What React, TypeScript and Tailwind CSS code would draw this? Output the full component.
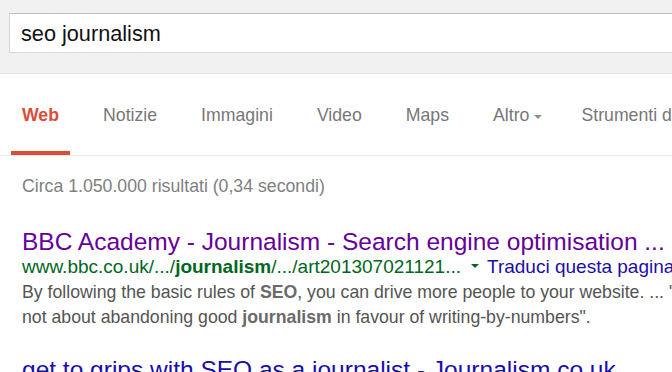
/**
 * SearchResults - Google results page, Italian locale, zoomed view.
 */

const tabs = ["Web", "Notizie", "Immagini", "Video", "Maps"];

export default function App() {
  return (
    <div className="h-[372px] w-full overflow-hidden bg-white font-['Liberation_Sans',Arial,sans-serif]">
      {/* Search bar */}
      <header className="h-[74px] overflow-hidden border-b border-[#e5e5e5] bg-[#f1f1f1] pl-[9px] pt-[13px]">
        <div className="h-[40px] w-[700px] border border-[#d9d9d9] border-t-[#c0c0c0] bg-white pl-[11px] pt-[2px] text-[21.7px] leading-[36px] whitespace-nowrap text-[#111]">
          seo journalism
        </div>
      </header>

      {/* Tabs */}
      <nav className="flex h-[82px] gap-[22px] overflow-hidden border-b border-[#ebebeb] pl-[11px] text-[17.7px] leading-[24px] whitespace-nowrap">
        {tabs.map((t, i) => (
          <div
            key={t}
            className={`h-[81px] shrink-0 border-b-4 px-[11px] pt-[29px] ${
              i === 0
                ? "border-[#dd4b39] font-bold text-[#dd4b39]"
                : "border-transparent text-[#777]"
            }`}
          >
            {t}
          </div>
        ))}
        <div className="h-[81px] shrink-0 border-b-4 border-transparent pl-[11px] pr-[6px] pt-[29px] text-[#777]">
          Altro
          <span className="ml-[5px] mb-[2px] inline-block border-x-4 border-t-4 border-x-transparent border-t-[#909090]" />
        </div>
        <div className="h-[81px] shrink-0 border-b-4 border-transparent px-[11px] pt-[29px] text-[#777]">
          Strumenti di ricerca
        </div>
      </nav>

      <main className="pl-[22px] whitespace-nowrap">
        <div className="mt-[18px] text-[17.7px] leading-[24px] text-[#808080]">
          Circa 1.050.000 risultati (0,34 secondi)
        </div>

        {/* First result */}
        <div className="mt-[29.5px]">
          <h3 className="text-[24.5px] leading-[28px] text-[#660099]">
            BBC Academy - Journalism - Search engine optimisation ...
          </h3>
          <div className="text-[19px] leading-[22px]">
            <cite className="not-italic text-[#006621]">
              www.bbc.co.uk/.../<b>journalism</b>/.../art201307021121...
            </cite>
            <span className="mb-[5px] ml-[10px] mr-[8px] inline-block border-x-4 border-t-4 border-x-transparent border-t-[#006621]" />
            <span className="text-[#1a0dab]">Traduci questa pagina</span>
          </div>
          <div className="mt-[2.6px] text-[17.7px] leading-[24.5px] text-[#545454]">
            <div>
              By following the basic rules of <b className="text-[#6a6a6a]">SEO</b>, you can drive
              more people to your website. ... "SEO is
            </div>
            <div>
              not about abandoning good <b className="text-[#6a6a6a]">journalism</b> in favour of
              writing-by-numbers".
            </div>
          </div>
        </div>

        {/* Second result */}
        <div className="mt-[27px]">
          <h3 className="text-[24.5px] leading-[28px] text-[#1a0dab]">
            get to grips with SEO as a journalist - Journalism.co.uk
          </h3>
        </div>
      </main>
    </div>
  );
}
